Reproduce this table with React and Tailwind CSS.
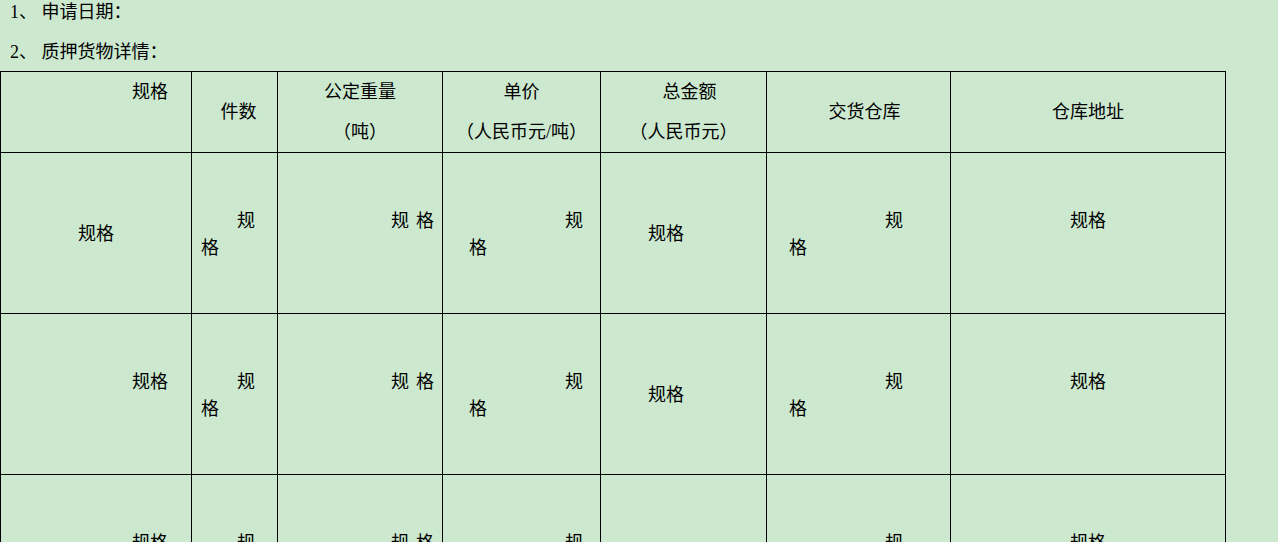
import React from "react";

const FONT = { fontFamily: '"Liberation Serif", "Noto Sans CJK SC", serif' };

function Two({ top, bottom, topClass = "", bottomClass = "" }) {
  return (
    <div className="w-full leading-[27px]">
      <div className={topClass}>{top}</div>
      <div className={bottomClass}>{bottom ? bottom : "\u00a0"}</div>
    </div>
  );
}

function Spaced() {
  return (
    <>
      规<span className="inline-block w-[7px]"></span>格
    </>
  );
}

function BodyRow({ first }) {
  const cell = "h-[161px] border-r border-b border-black flex items-center pt-[3px]";
  return (
    <>
      <div className={cell}>
        {first ? (
          <div className="w-full text-center leading-[27px]">规格</div>
        ) : (
          <Two top="规格" topClass="text-right pr-[23px]" />
        )}
      </div>
      <div className={cell}>
        <Two top="规" bottom="格" topClass="text-right pr-[22px]" bottomClass="pl-[9px]" />
      </div>
      <div className={cell}>
        <Two top={<Spaced />} topClass="text-right pr-[8px]" />
      </div>
      <div className={cell}>
        <Two top="规" bottom="格" topClass="text-right pr-[17px]" bottomClass="pl-[26px]" />
      </div>
      <div className={cell}>
        <div className="w-full pl-[47px] leading-[27px]">规格</div>
      </div>
      <div className={cell}>
        <Two top="规" bottom="格" topClass="text-right pr-[47px]" bottomClass="pl-[22px]" />
      </div>
      <div className={cell}>
        <Two top="规格" topClass="text-center" />
      </div>
    </>
  );
}

export default function App() {
  const head = "h-[81px] border-r border-b border-black flex flex-col items-stretch pt-[10px] leading-[20px] gap-[20px]";
  return (
    <div className="w-full h-[542px] overflow-hidden bg-[#cce8cf] text-black text-[18px]" style={FONT}>
      <div className="pl-[10px] h-[22px] leading-[22px] pt-[1px]">1、 申请日期：</div>
      <div className="pl-[10px] h-[22px] leading-[22px] mt-[18px] pt-[1px]">2、 质押货物详情：</div>
      <div className="mt-[9px] w-[1226px] grid grid-cols-[191px_86px_165px_158px_166px_184px_275px] border-l border-t border-black">
        <div className={head}>
          <div className="text-right pr-[23px]">规格</div>
        </div>
        <div className="h-[81px] border-r border-b border-black pt-[30px] leading-[20px] text-center pl-[8px]">件数</div>
        <div className={head + " text-center"}>
          <div>公定重量</div>
          <div>（吨）</div>
        </div>
        <div className={head + " text-center"}>
          <div>单价</div>
          <div>（人民币元/吨）</div>
        </div>
        <div className={head + " text-center"}>
          <div className="pl-[12px]">总金额</div>
          <div>（人民币元）</div>
        </div>
        <div className="h-[81px] border-r border-b border-black pt-[30px] leading-[20px] text-center pl-[12px]">交货仓库</div>
        <div className="h-[81px] border-r border-b border-black pt-[30px] leading-[20px] text-center">仓库地址</div>
        <BodyRow first />
        <BodyRow />
        <BodyRow />
      </div>
    </div>
  );
}
